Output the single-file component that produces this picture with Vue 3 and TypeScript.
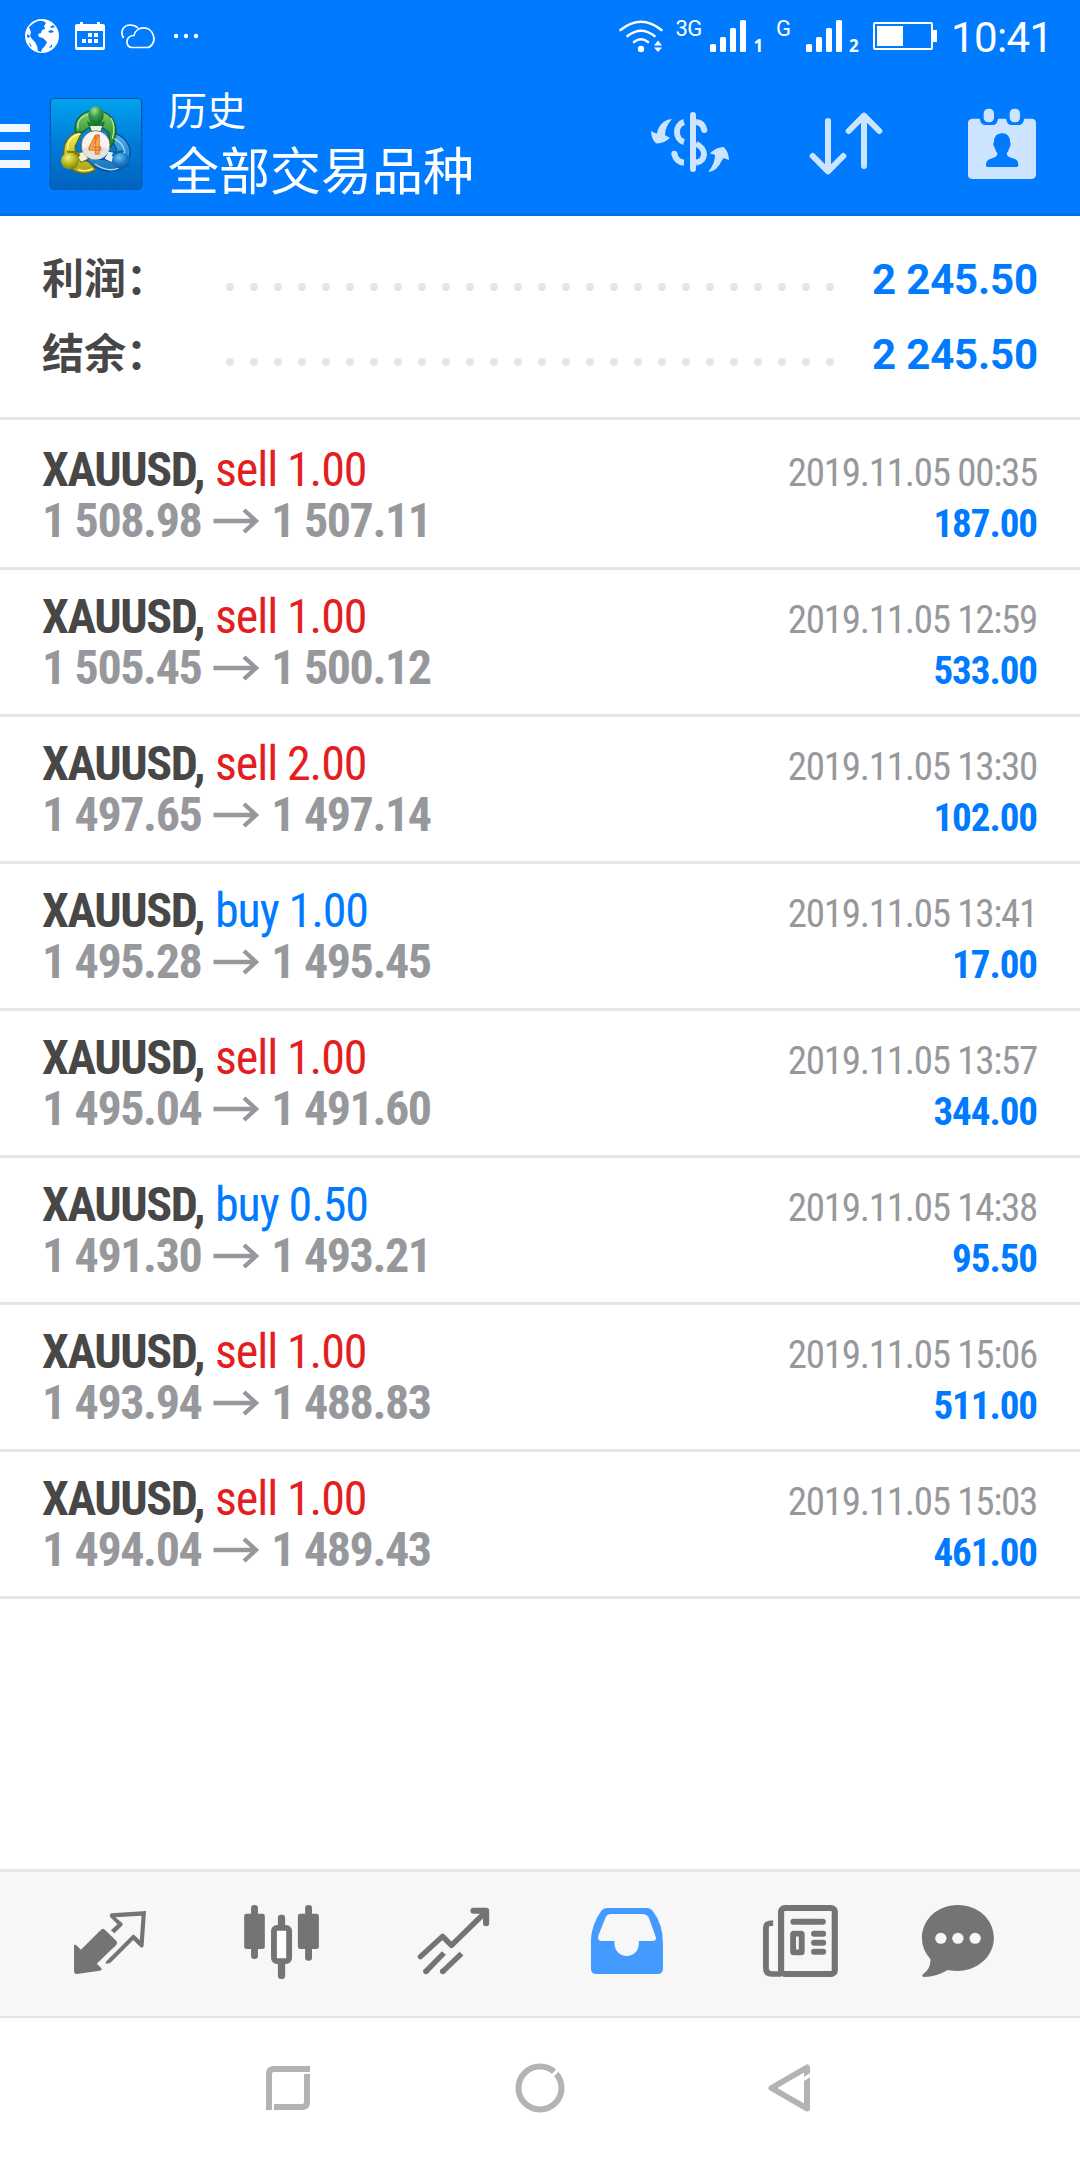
<script setup lang="ts">
interface Deal {
  side: 'sell' | 'buy'
  volume: string
  open: string
  close: string
  time: string
  profit: string
}

const summary: { label: string; value: string }[] = [
  { label: '利润：', value: '2 245.50' },
  { label: '结余：', value: '2 245.50' },
]

const deals: Deal[] = [
  { side: 'sell', volume: '1.00', open: '1 508.98', close: '1 507.11', time: '2019.11.05 00:35', profit: '187.00' },
  { side: 'sell', volume: '1.00', open: '1 505.45', close: '1 500.12', time: '2019.11.05 12:59', profit: '533.00' },
  { side: 'sell', volume: '2.00', open: '1 497.65', close: '1 497.14', time: '2019.11.05 13:30', profit: '102.00' },
  { side: 'buy', volume: '1.00', open: '1 495.28', close: '1 495.45', time: '2019.11.05 13:41', profit: '17.00' },
  { side: 'sell', volume: '1.00', open: '1 495.04', close: '1 491.60', time: '2019.11.05 13:57', profit: '344.00' },
  { side: 'buy', volume: '0.50', open: '1 491.30', close: '1 493.21', time: '2019.11.05 14:38', profit: '95.50' },
  { side: 'sell', volume: '1.00', open: '1 493.94', close: '1 488.83', time: '2019.11.05 15:06', profit: '511.00' },
  { side: 'sell', volume: '1.00', open: '1 494.04', close: '1 489.43', time: '2019.11.05 15:03', profit: '461.00' },
]
</script>

<template>
  <div class="screen">
    <header class="top">
      <div class="status">
        <svg class="notifications" width="220" height="72" viewBox="0 0 220 72">
          <circle cx="42" cy="36" r="17" fill="#fff" />
          <path fill="#007aff" d="M34 23l4-2 5 0 3 2-2 3 1 3-3 1-1 3-3 1 1 3 4 1 4 4-2 4-3 3-1 3-3-1-1-5-2-4-3-3-2-3 1-4-2-5z" />
          <path fill="#007aff" d="M50 27l3-2 2 2-3 1zM48 31l4-1 2 2-4 1zM27 34l3 2-1 2-2-1zM29 42l3 5-2-1zM49 48l3-4 0 3z" />
          <path fill="#fff" d="M77 24h3v-2h3v2h14v-2h3v2h3q2 0 2 2v22q0 2-2 2H77q-2 0-2-2V26q0-2 2-2zM77 31v16h26V31z" fill-rule="evenodd" />
          <path fill="#fff" d="M88 33h4v4h-4zM94 33h4v4h-4zM82 39h4v4h-4zM88 39h4v4h-4zM94 39h4v4h-4z" />
          <g fill="none" stroke="#fff" stroke-width="1.7">
            <path d="M123.500 38C119 30 125 25 130 25Q135 25 138 28" />
            <path d="M132 47.500C125 47.500 125 35.500 134 35.500C136 25.500 151 25 153.500 36C155.500 42 151 47.500 147 47.500Z" stroke-linejoin="round" />
          </g>
          <g fill="#fff"><circle cx="176" cy="36" r="2.200" /><circle cx="186" cy="36" r="2.200" /><circle cx="196" cy="36" r="2.200" /></g>
        </svg>
        <svg class="indicators" width="330" height="72" viewBox="615 0 330 72">
          <g fill="none" stroke="#fff" stroke-width="2.600" stroke-linecap="round">
            <path d="M620.500 30Q641 13.500 661.500 30" />
            <path d="M627.500 36Q641 25.500 654.500 36" />
            <path d="M634 42Q641 36.500 648 42" />
          </g>
          <circle cx="641" cy="49" r="3.200" fill="#fff" />
          <path fill="#fff" d="M654 45.500L658 40.500L662 45.500ZM654 47.500H662L658 52Z" />
          <text class="net" x="675.500" y="36">3G</text>
          <g fill="#fff">
            <rect x="710" y="44" width="6" height="8" rx="1.500" /><rect x="720" y="37" width="6" height="15" rx="1.500" />
            <rect x="730" y="28" width="6" height="24" rx="1.500" /><rect x="740" y="20" width="6" height="32" rx="1.500" />
            <rect x="806" y="44" width="6" height="8" rx="1.500" /><rect x="816" y="37" width="6" height="15" rx="1.500" />
            <rect x="826" y="28" width="6" height="24" rx="1.500" /><rect x="836" y="20" width="6" height="32" rx="1.500" />
          </g>
          <text class="sim" x="753.500" y="52">1</text>
          <text class="net" x="776" y="36">G</text>
          <text class="sim" x="849" y="52">2</text>
          <rect x="874" y="23" width="58" height="26" rx="1" fill="none" stroke="#fff" stroke-width="2" />
          <path fill="#fff" d="M877 26h26v20h-26zM932 30h5v12h-5z" />
        </svg>
        <span class="clock">10:41</span>
      </div>

      <div class="toolbar">
        <div class="menu"><i /><i /><i /></div>
        <svg class="logo" width="94" height="94" viewBox="26 21 282 282">
          <defs>
            <linearGradient id="tile" x1="0" y1="0" x2="0" y2="1"><stop offset="0" stop-color="#00a3ee" /><stop offset=".5" stop-color="#007bd8" /><stop offset="1" stop-color="#0063bf" /></linearGradient>
            <linearGradient id="green" x1="0" y1="0" x2="0" y2="1"><stop offset="0" stop-color="#8ccf6c" /><stop offset=".5" stop-color="#43a344" /><stop offset="1" stop-color="#207a2b" /></linearGradient>
            <linearGradient id="yellow" x1="0" y1="0" x2="0" y2="1"><stop offset="0" stop-color="#f8ee50" /><stop offset="1" stop-color="#a5a110" /></linearGradient>
            <linearGradient id="azure" x1="0" y1="0" x2="0" y2="1"><stop offset="0" stop-color="#4eb3e8" /><stop offset="1" stop-color="#1673bd" /></linearGradient>
            <radialGradient id="headGreen" cx=".4" cy=".25" r=".8"><stop offset="0" stop-color="#9ee49a" /><stop offset=".45" stop-color="#359a4a" /><stop offset="1" stop-color="#0f672b" /></radialGradient>
            <radialGradient id="headYellow" cx=".4" cy=".3" r=".8"><stop offset="0" stop-color="#f4f27a" /><stop offset=".5" stop-color="#b5b51c" /><stop offset="1" stop-color="#6d7410" /></radialGradient>
            <radialGradient id="headAzure" cx=".4" cy=".3" r=".8"><stop offset="0" stop-color="#6cc5f0" /><stop offset=".5" stop-color="#1c7cc4" /><stop offset="1" stop-color="#0a4d96" /></radialGradient>
          </defs>
          <rect x="30" y="25" width="274" height="273" rx="12" fill="url(#tile)" stroke="#0759ad" stroke-width="4" />
          <path d="M70 28V295M118 28V295M166 28V295M214 28V295M262 28V295M32 70H302M32 118H302M32 166H302M32 214H302M32 262H302" stroke="#35b0ee" stroke-opacity=".12" stroke-width="2" />
          <g stroke-linejoin="round">
            <path d="M126 124C90 126 62 160 72 204C84 246 128 262 166 240L150 214C124 214 104 196 104 170Z" fill="url(#yellow)" stroke="#5f6a12" stroke-width="4" />
            <path d="M206 128C256 130 284 180 262 214C238 254 176 252 138 208L160 200C188 218 226 206 228 178Z" fill="url(#azure)" stroke="#0b4f93" stroke-width="4" />
            <path d="M106 128C96 84 132 62 166 62C208 62 232 96 226 134C222 156 214 170 208 172L206 130C190 106 150 104 128 126Z" fill="url(#green)" stroke="#17602a" stroke-width="4" />
            <path d="M114 116C108 90 128 76 144 74M212 84C224 104 220 132 216 146" fill="none" stroke="#b6e29a" stroke-width="4" />
            <path d="M82 178C80 152 98 136 120 132M112 238Q136 248 158 236" fill="none" stroke="#fbf9a8" stroke-width="4" />
            <path d="M222 146C250 160 256 184 250 196M164 222C190 240 214 244 236 234" fill="none" stroke="#a4dcf8" stroke-width="4" />
          </g>
          <path d="M146 104L152 97H180L188 106L181 126H154Z" fill="#e9f4e7" stroke="#17602a" stroke-width="3" />
          <path d="M105 190L134 184L144 207L122 217Z" fill="#f5f3d4" stroke="#6a6b10" stroke-width="3" />
          <path d="M228 189L204 183L191 207L214 218Z" fill="#def1fb" stroke="#0b4f93" stroke-width="3" />
          <path d="M140 92Q166 112 194 92L190 108H144Z" fill="#1e7a31" />
          <path d="M78 184Q112 178 120 196L108 210Z" fill="#7b7d12" />
          <path d="M252 182Q224 180 214 196L226 210Z" fill="#155c9f" />
          <ellipse cx="167" cy="76" rx="23" ry="28" fill="url(#headGreen)" />
          <ellipse cx="89" cy="213" rx="27" ry="25" fill="url(#headYellow)" />
          <ellipse cx="242" cy="212" rx="27" ry="24" fill="url(#headAzure)" />
          <circle cx="166" cy="165" r="43" fill="#f5f4f2" stroke="#704e28" stroke-opacity=".7" stroke-width="3" />
          <path d="M124 175A43 43 0 0 0 208 175Q166 166 124 175Z" fill="#e2e2e2" />
          <text class="four" x="144" y="192">4</text>
        </svg>
        <div class="titles">
          <div class="caption">历史</div>
          <div class="title">全部交易品种</div>
        </div>
        <svg class="actions" width="270" height="110" viewBox="0 0 810 330">
          <g fill="#cce4ff">
            <path d="M126 87Q98 88 84 118L80 131L63 123Q64 148 78 160Q101 162 120 143L105 136Q105 110 126 87Z" />
            <path d="M234 246Q262 243 275 212L281 204L297 210Q296 184 281 171Q260 171 240 190L255 195Q256 220 234 246Z" />
            <rect x="180" y="66" width="18" height="180" rx="9" />
          </g>
          <g fill="none" stroke="#cce4ff" stroke-width="18">
            <path d="M162 96C134 104 134 148 162 156M198 96Q220 98 223 121" />
            <path d="M198 162C230 174 230 214 198 218M133 191Q138 216 162 218" />
          </g>
          <g fill="#cce4ff"><circle cx="223" cy="120" r="9" /><circle cx="133" cy="191" r="9" /></g>
          <g fill="none" stroke="#cce4ff" stroke-width="18" stroke-linecap="round" stroke-linejoin="round">
            <path d="M594 93V242M548 198L594 244L640 198" />
            <path d="M702 228V78M656 123L702 77L748 123" />
          </g>
        </svg>
        <svg class="account" width="72" height="74" viewBox="1098 318 216 222">
          <path fill="#cce4ff" fill-rule="evenodd" d="M1116 353H1139Q1143 372 1156 372H1180Q1192 370 1194 353H1218Q1222 372 1234 372H1258Q1270 370 1273 353H1297Q1308 354 1308 366V522Q1307 533 1296 534H1116Q1104 533 1104 522V366Q1104 355 1116 353ZM1206 397C1190 397 1181 409 1182 423Q1177 430 1184 440Q1187 450 1192 456Q1192 466 1184 469L1165 476Q1157 481 1158 493Q1158 498 1163 498H1250Q1255 498 1255 492Q1255 480 1247 475L1229 469Q1220 465 1220 457Q1226 450 1228 440Q1235 430 1230 423C1231 408 1222 397 1206 397Z" />
          <rect x="1151" y="323" width="31" height="41" rx="14" fill="#cce4ff" />
          <rect x="1229" y="323" width="31" height="41" rx="14" fill="#cce4ff" />
        </svg>
      </div>
    </header>

    <section class="summary">
      <div v-for="item in summary" :key="item.label" class="sum-row">
        <span class="label">{{ item.label }}</span>
        <svg class="leader" width="612" height="10" viewBox="0 0 612 10">
          <line x1="6" y1="5" x2="607" y2="5" stroke="#e5e5e5" stroke-width="8" stroke-linecap="round" stroke-dasharray="0 24" />
        </svg>
        <span class="value">{{ item.value }}</span>
      </div>
    </section>

    <ul class="deals">
      <li v-for="deal in deals" :key="deal.time" class="deal">
        <div class="line">
          <span class="symbol"><b>XAUUSD,</b><span class="op" :class="deal.side">{{ deal.side }} {{ deal.volume }}</span></span>
          <span class="time">{{ deal.time }}</span>
        </div>
        <div class="line">
          <span class="prices">
            <span>{{ deal.open }}</span>
            <svg class="arrow" width="48" height="26" viewBox="0 0 48 26"><path d="M0.500 13H43M31 2L43 13L31 24" fill="none" stroke="#97989c" stroke-width="4.400" /></svg>
            <span>{{ deal.close }}</span>
          </span>
          <span class="profit">{{ deal.profit }}</span>
        </div>
      </li>
    </ul>

    <nav class="tabs">
      <svg viewBox="0 66 522.670 432" preserveAspectRatio="none">
        <path fill="#747474" d="M299 236Q303 237 306 241L338 273Q342 279 338 284L281 341L294 354Q297 360 290 362L223 372Q215 371 215 364V285Q218 284 221 285L235 299L292 241Q296 236 299 236Z" />
        <path fill="#747474" d="M424 183L417 288Q414 295 408 292L387 270L323 336Q318 342 306 340L309 334L382 258Q387 250 393 258L406 271L411 197L335 202L355 219Q358 224 354 228L332 250L322 241L341 223L320 201Q316 193 324 190Z" />
      </svg>
      <svg viewBox="522.670 66 522.670 432" preserveAspectRatio="none">
        <g fill="#747474">
          <rect x="709" y="191" width="60" height="106" rx="7" /><rect x="729" y="165" width="20" height="162" rx="9" />
          <rect x="865" y="191" width="61" height="106" rx="7" /><rect x="886" y="165" width="20" height="167" rx="9" />
          <rect x="807" y="194" width="21" height="50" rx="9" /><rect x="807" y="325" width="21" height="62" rx="9" />
        </g>
        <rect x="795.500" y="233.500" width="44" height="100" rx="9" fill="#fff" stroke="#747474" stroke-width="17" />
      </svg>
      <svg viewBox="1045.330 66 522.670 432" preserveAspectRatio="none">
        <g fill="none" stroke="#747474" stroke-width="16">
          <path d="M1221 320L1285 259L1311 286L1404 192" stroke-linejoin="round" stroke-linecap="round" />
          <path d="M1375 182.500H1411.500V220" stroke-width="18" stroke-linejoin="round" stroke-linecap="round" />
          <path d="M1237 364L1289 309M1286 364L1340 311" />
        </g>
        <g fill="#747474"><circle cx="1237" cy="364" r="8.500" /><circle cx="1286" cy="364" r="8.500" /></g>
      </svg>
      <svg viewBox="0 66 522.670 432" preserveAspectRatio="none">
        <path fill="#439bff" fill-rule="evenodd" d="M194 174H311Q321 174 327 182Q357 222 357 279V356Q357 372 341 372H164Q148 372 148 356V270Q149 225 178 182Q184 174 194 174ZM207 192Q195 192 191 201L169 258Q166 273 180 273H216C212 333 292 333 287 273H325Q340 273 336 260L315 201Q310 192 294 192Z" />
      </svg>
      <svg viewBox="522.670 66 522.670 432" preserveAspectRatio="none">
        <g fill="none" stroke="#747474" stroke-width="18">
          <rect x="700" y="174" width="156" height="198" rx="11" />
          <path d="M677 219Q656 219 656 232V354Q656 372 674 372H700" stroke-width="17" />
          <rect x="735" y="251" width="25" height="56" rx="2" stroke-width="17" />
          <path d="M736 215.500H821M796 251.500H822M796 278.500H822M796 305.500H822" stroke-linecap="round" />
        </g>
      </svg>
      <svg viewBox="1045.330 66 522.670 432" preserveAspectRatio="none">
        <path fill="#747474" d="M1213 165C1274 165 1318 210 1318 264C1318 320 1268 363 1213 363Q1198 363 1184 360Q1153 380 1114 381Q1106 377 1113 372Q1134 358 1134 328Q1109 300 1109 264C1109 210 1153 165 1213 165Z" />
        <g fill="#f7f7f7"><circle cx="1164" cy="265" r="16.500" /><circle cx="1213.500" cy="265" r="16.500" /><circle cx="1263.500" cy="265" r="16.500" /></g>
      </svg>
    </nav>

    <footer class="system">
      <svg width="252" height="142" viewBox="162 2018 252 142"><path d="M269 2110V2074Q269 2069 274 2069H310M274 2107H302Q307 2107 307 2102V2074" fill="none" stroke="#b3b3b3" stroke-width="6" /></svg>
      <svg width="252" height="142" viewBox="414 2018 252 142"><circle cx="540" cy="2088" r="21.500" fill="none" stroke="#b3b3b3" stroke-width="6" /><path d="M550 2078L561 2067" stroke="#fff" stroke-width="3.200" /></svg>
      <svg width="252" height="142" viewBox="666 2018 252 142"><path d="M807 2067.500V2108.500L771.500 2088Z" fill="none" stroke="#b3b3b3" stroke-width="6" stroke-linejoin="round" /><path d="M801.500 2080.500L813 2073.300" stroke="#fff" stroke-width="3.400" /></svg>
    </footer>
  </div>
</template>

<style>
body {
  margin: 0;
  background: #fff;
}
</style>

<style scoped>
.screen {
  width: 1080px;
  height: 2160px;
  display: flex;
  flex-direction: column;
  background: #fff;
  overflow: hidden;
  font-family: Roboto, "Noto Sans CJK SC", sans-serif;
}
svg {
  display: block;
  flex: none;
}
.top {
  height: 213px;
  background: #007aff;
  border-bottom: 3px solid #0070e8;
  color: #fff;
}
.status {
  height: 72px;
  display: flex;
}
.indicators {
  margin-left: 395px;
}
.net {
  font: 400 22px Roboto, sans-serif;
  letter-spacing: -0.5px;
  fill: #fff;
}
.sim {
  font: 700 17px "Noto Sans", sans-serif;
  fill: #fff;
}
.clock {
  margin-left: 6px;
  font-size: 42px;
  line-height: 75px;
  letter-spacing: -0.6px;
  white-space: nowrap;
}
.toolbar {
  height: 141px;
  display: flex;
  align-items: flex-start;
}
.menu {
  width: 30px;
  display: flex;
  flex-direction: column;
  gap: 10px;
  margin-top: 52px;
}
.menu i {
  height: 8px;
  background: #f0f7ff;
}
.logo {
  margin: 25px 0 0 19px;
}
.four {
  font: 700 80px "Roboto Condensed", Roboto, sans-serif;
  fill: #fbb040;
  stroke: #e0702a;
  stroke-width: 3px;
}
.titles {
  margin-left: 25px;
  width: 321px;
  white-space: nowrap;
  font-family: "Noto Sans CJK SC", sans-serif;
}
.caption {
  font-size: 39px;
  line-height: 50px;
  padding-top: 11px;
}
.title {
  font-size: 51px;
  line-height: 60px;
  margin-top: 5px;
}
.actions {
  margin: 18px 0 0 141px;
}
.account {
  margin: 35px 0 0 66px;
}
.summary {
  height: 166px;
  padding: 35px 42px 0 42px;
  border-bottom: 3px solid #e5e5e5;
  margin-bottom: 3px;
}
.sum-row {
  height: 75px;
  display: flex;
  align-items: flex-start;
}
.label {
  width: 182px;
  font: 700 42px/50px "Noto Sans CJK SC", sans-serif;
  color: #474747;
  white-space: nowrap;
}
.leader {
  margin-top: 31px;
}
.value {
  margin-left: auto;
  font-weight: 700;
  font-size: 42px;
  line-height: 58px;
  letter-spacing: -0.15px;
  color: #007aff;
  white-space: nowrap;
}
.deals {
  list-style: none;
  margin: 0;
  padding: 0;
}
.deal {
  box-sizing: border-box;
  height: 147px;
  padding: 21px 43px 0 42px;
  border-bottom: 3px solid #e5e5e5;
  font-family: "Roboto Condensed", Roboto, sans-serif;
  font-stretch: 75%;
  white-space: nowrap;
}
.line {
  height: 51px;
  line-height: 51px;
  display: flex;
  justify-content: space-between;
  align-items: baseline;
}
.symbol,
.prices {
  font-size: 48px;
}
.symbol b {
  color: #474747;
  letter-spacing: -1.4px;
}
.op {
  margin-left: 11px;
  letter-spacing: -1.1px;
}
.sell {
  color: #e41e20;
}
.buy {
  color: #007aff;
}
.time {
  font-size: 39px;
  color: #97989c;
  letter-spacing: -1.28px;
}
.prices {
  display: flex;
  align-items: center;
  font-weight: 700;
  color: #97989c;
  letter-spacing: -1.4px;
}
.arrow {
  margin: 0 10px 0 12px;
}
.profit {
  font-size: 39px;
  font-weight: 700;
  color: #007aff;
  letter-spacing: -1.05px;
}
.tabs {
  height: 144px;
  margin-top: auto;
  display: flex;
  background: #f7f7f7;
  border-top: 3px solid #e5e5e5;
  border-bottom: 2px solid #e5e5e5;
}
.tabs svg {
  width: 180px;
  height: 144px;
}
.system {
  height: 142px;
  display: flex;
  justify-content: center;
}
</style>
